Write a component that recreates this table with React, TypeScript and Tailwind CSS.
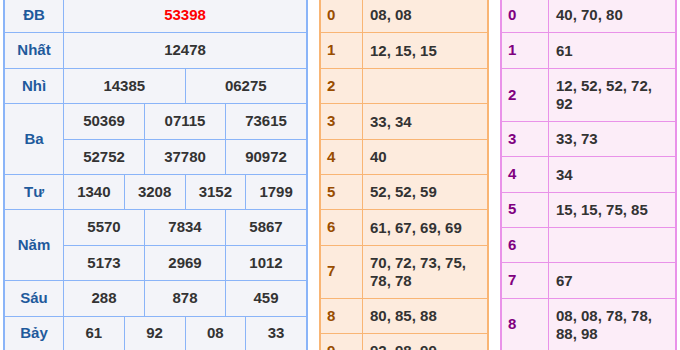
import React from "react";

type Prize = { label: string; rows: string[][]; red?: boolean };

const prizes: Prize[] = [
  { label: "ĐB", rows: [["53398"]], red: true },
  { label: "Nhất", rows: [["12478"]] },
  { label: "Nhì", rows: [["14385", "06275"]] },
  {
    label: "Ba",
    rows: [
      ["50369", "07115", "73615"],
      ["52752", "37780", "90972"],
    ],
  },
  { label: "Tư", rows: [["1340", "3208", "3152", "1799"]] },
  {
    label: "Năm",
    rows: [
      ["5570", "7834", "5867"],
      ["5173", "2969", "1012"],
    ],
  },
  { label: "Sáu", rows: [["288", "878", "459"]] },
  { label: "Bảy", rows: [["61", "92", "08", "33"]] },
];

const heads: string[] = [
  "08, 08",
  "12, 15, 15",
  "",
  "33, 34",
  "40",
  "52, 52, 59",
  "61, 67, 69, 69",
  "70, 72, 73, 75, 78, 78",
  "80, 85, 88",
  "92, 98, 99",
];

const tails: string[] = [
  "40, 70, 80",
  "61",
  "12, 52, 52, 72, 92",
  "33, 73",
  "34",
  "15, 15, 75, 85",
  "",
  "67",
  "08, 08, 78, 78, 88, 98",
  "59, 69, 69, 99",
];

// 12-col grid so 1, 2, 3 and 4 cells per row all line up
const spanFor = (n: number) => {
  switch (n) {
    case 1:
      return "col-span-12";
    case 2:
      return "col-span-6";
    case 3:
      return "col-span-4";
    default:
      return "col-span-3";
  }
};

const ResultTable = () => (
  <div className="grid w-[305px] grid-cols-[58px_repeat(12,1fr)] auto-rows-[34.4px] gap-px border-2 border-[#8ab4f8] bg-[#8ab4f8]">
    {prizes.map((p) => (
      <React.Fragment key={p.label}>
        <div
          className={`flex items-center justify-center bg-[#f3f4f9] font-bold text-[#1f5a9c] ${
            p.rows.length === 2 ? "row-span-2" : ""
          }`}
        >
          {p.label}
        </div>
        {p.rows.map((row, ri) =>
          row.map((num, ci) => (
            <div
              key={`${p.label}-${ri}-${ci}`}
              className={`flex items-center justify-center bg-[#f3f4f9] font-bold ${spanFor(
                row.length,
              )} ${p.red ? "text-[#f00]" : "text-[#333]"}`}
            >
              {num}
            </div>
          )),
        )}
      </React.Fragment>
    ))}
  </div>
);

const LotoTable = ({
  data,
  width,
  labelCol,
  border,
  bg,
  labelColor,
}: {
  data: string[];
  width: string;
  labelCol: string;
  border: string;
  bg: string;
  labelColor: string;
}) => (
  <div className={`grid gap-px border-2 ${width} ${labelCol} ${border}`}>
    {data.map((val, i) => (
      <React.Fragment key={i}>
        <div
          className={`flex min-h-[34.4px] items-center pl-[6px] font-bold ${bg} ${labelColor}`}
        >
          {i}
        </div>
        <div
          className={`flex min-h-[34.4px] items-center py-[8.4px] pl-[7px] pr-[6px] font-bold leading-[17.6px] text-[#333] ${bg}`}
        >
          {val}
        </div>
      </React.Fragment>
    ))}
  </div>
);

export default function App() {
  return (
    <div
      className="flex h-[350px] w-[680px] items-start overflow-hidden bg-white pl-[3px] text-[15px]"
      style={{ fontFamily: '"Liberation Sans", Arial, sans-serif' }}
    >
      <div className="-mt-[4px] flex items-start gap-[11px]">
        <ResultTable />
        <LotoTable
          data={heads}
          width="w-[170px]"
          labelCol="grid-cols-[41px_1fr]"
          border="border-[#f9b574] bg-[#f9b574]"
          bg="bg-[#fdebdd]"
          labelColor="text-[#994d00]"
        />
        <LotoTable
          data={tails}
          width="w-[177px]"
          labelCol="grid-cols-[46px_1fr]"
          border="border-[#e992e9] bg-[#e992e9]"
          bg="bg-[#fcedf8]"
          labelColor="text-[#800080]"
        />
      </div>
    </div>
  );
}
